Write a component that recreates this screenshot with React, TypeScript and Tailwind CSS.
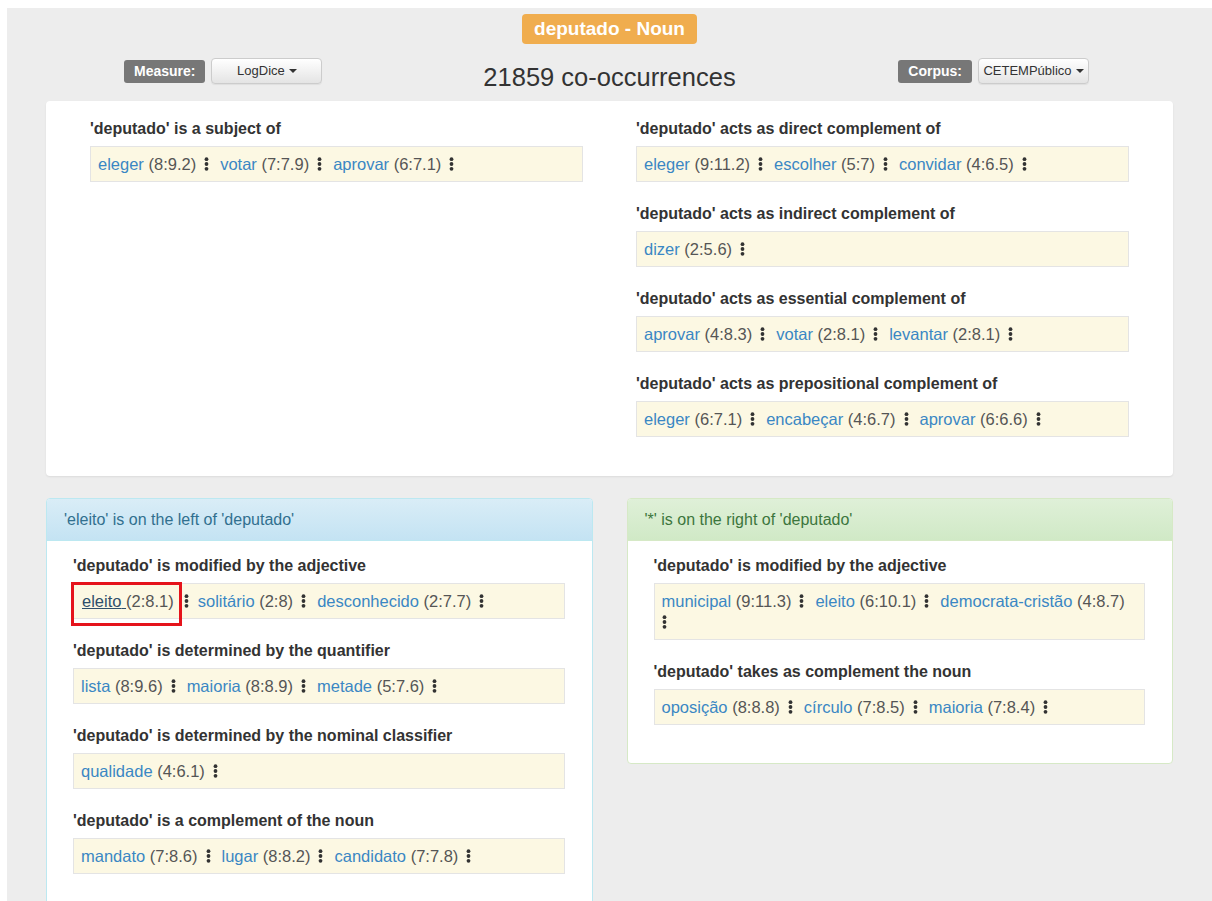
import React from 'react';

type Hit = { word: string; score: string; active?: boolean; breakMenu?: boolean };
type Relation = { title: string; hits: Hit[] };

const SUBJECT: Relation[] = [
  {
    title: "'deputado' is a subject of",
    hits: [
      { word: 'eleger', score: '(8:9.2)' },
      { word: 'votar', score: '(7:7.9)' },
      { word: 'aprovar', score: '(6:7.1)' },
    ],
  },
];

const COMPLEMENTS: Relation[] = [
  {
    title: "'deputado' acts as direct complement of",
    hits: [
      { word: 'eleger', score: '(9:11.2)' },
      { word: 'escolher', score: '(5:7)' },
      { word: 'convidar', score: '(4:6.5)' },
    ],
  },
  {
    title: "'deputado' acts as indirect complement of",
    hits: [{ word: 'dizer', score: '(2:5.6)' }],
  },
  {
    title: "'deputado' acts as essential complement of",
    hits: [
      { word: 'aprovar', score: '(4:8.3)' },
      { word: 'votar', score: '(2:8.1)' },
      { word: 'levantar', score: '(2:8.1)' },
    ],
  },
  {
    title: "'deputado' acts as prepositional complement of",
    hits: [
      { word: 'eleger', score: '(6:7.1)' },
      { word: 'encabeçar', score: '(4:6.7)' },
      { word: 'aprovar', score: '(6:6.6)' },
    ],
  },
];

const LEFT: Relation[] = [
  {
    title: "'deputado' is modified by the adjective",
    hits: [
      { word: 'eleito', score: '(2:8.1)', active: true },
      { word: 'solitário', score: '(2:8)' },
      { word: 'desconhecido', score: '(2:7.7)' },
    ],
  },
  {
    title: "'deputado' is determined by the quantifier",
    hits: [
      { word: 'lista', score: '(8:9.6)' },
      { word: 'maioria', score: '(8:8.9)' },
      { word: 'metade', score: '(5:7.6)' },
    ],
  },
  {
    title: "'deputado' is determined by the nominal classifier",
    hits: [{ word: 'qualidade', score: '(4:6.1)' }],
  },
  {
    title: "'deputado' is a complement of the noun",
    hits: [
      { word: 'mandato', score: '(7:8.6)' },
      { word: 'lugar', score: '(8:8.2)' },
      { word: 'candidato', score: '(7:7.8)' },
    ],
  },
];

const RIGHT: Relation[] = [
  {
    title: "'deputado' is modified by the adjective",
    hits: [
      { word: 'municipal', score: '(9:11.3)' },
      { word: 'eleito', score: '(6:10.1)' },
      { word: 'democrata-cristão', score: '(4:8.7)', breakMenu: true },
    ],
  },
  {
    title: "'deputado' takes as complement the noun",
    hits: [
      { word: 'oposição', score: '(8:8.8)' },
      { word: 'círculo', score: '(7:8.5)' },
      { word: 'maioria', score: '(7:8.4)' },
    ],
  },
];

function Dots({ className = '' }: { className?: string }) {
  return (
    <svg width="5" height="14" viewBox="0 0 5 14" className={`inline-block align-[-1px] ${className}`}>
      <circle cx="2.5" cy="2.2" r="1.9" fill="#333" />
      <circle cx="2.5" cy="7" r="1.9" fill="#333" />
      <circle cx="2.5" cy="11.8" r="1.9" fill="#333" />
    </svg>
  );
}

function HitList({ hits }: { hits: Hit[] }) {
  const marked = hits.some((h) => h.active);
  return (
    <div className="relative border border-[#e4e4e4] bg-[#fcf8e3] px-[7px] pt-[7px] pb-[6px] text-[16.5px] leading-[21px]">
      {hits.map((h, i) => (
        <React.Fragment key={i}>
          <span className={h.active ? 'ml-[1px] text-[#2f4f6b] underline' : 'text-[#3a87c4]'}>
            {h.word}
            {h.active ? ' ' : ''}
          </span>
          {!h.active && ' '}
          <span className="text-[#555]">{h.score}</span>
          {h.breakMenu ? (
            <>
              <br />
              <Dots />
            </>
          ) : (
            <Dots className={h.active ? 'ml-[10px] mr-[9px]' : 'ml-[8px] mr-[11px]'} />
          )}
        </React.Fragment>
      ))}
      {marked && (
        <div className="pointer-events-none absolute left-[-3px] top-[-2px] h-[44px] w-[111px] border-[3px] border-[#e5131b]" />
      )}
    </div>
  );
}

function RelationBlock({ rel }: { rel: Relation }) {
  return (
    <div className="mb-[21px]">
      <div className="mb-[7px] text-[16px] font-bold leading-[21px] text-[#333]">{rel.title}</div>
      <HitList hits={rel.hits} />
    </div>
  );
}

function Panel({ title, tone, rels }: { title: string; tone: 'info' | 'success'; rels: Relation[] }) {
  const info = tone === 'info';
  return (
    <div className={`overflow-hidden rounded-[4px] border bg-white ${info ? 'border-[#bce8f1]' : 'border-[#d6e9c6]'}`}>
      <div
        className={`flex h-[42px] items-center border-b px-[17px] text-[16px] ${
          info
            ? 'border-[#bce8f1] bg-linear-to-b from-[#d9edf7] to-[#c4e3f3] text-[#31708f]'
            : 'border-[#d6e9c6] bg-linear-to-b from-[#dff0d8] to-[#d0e9c6] text-[#3c763d]'
        }`}
      >
        {title}
      </div>
      <div className="pl-[26px] pr-[27px] pt-[14px] pb-[17px]">
        {rels.map((r, i) => (
          <RelationBlock key={i} rel={r} />
        ))}
      </div>
    </div>
  );
}

function Caret() {
  return <span className="ml-[4px] inline-block h-0 w-0 border-x-[4px] border-t-[4px] border-x-transparent border-t-[#333] align-middle" />;
}

function Picker({ label, value }: { label: string; value: string }) {
  return (
    <div className="flex items-center gap-[6px]">
      <span className="flex h-[23px] items-center rounded-[3px] bg-[#777] px-[10px] text-[14px] font-bold text-white">{label}</span>
      <button className="flex h-[26px] w-[111px] items-center justify-center rounded-[4px] border border-[#ccc] bg-linear-to-b from-white to-[#e4e4e4] text-[13px] text-[#333] shadow-[0_1px_1px_rgba(0,0,0,0.06)]">
        {value}
        <Caret />
      </button>
    </div>
  );
}

export default function App() {
  return (
    <div className="min-h-[901px] bg-white pl-[7px] pt-[8px] font-['Liberation_Sans',Arial,sans-serif]">
      <div className="min-h-[893px] bg-[#ededed] px-[39px] pt-[6px]">
        <div className="flex justify-center">
          <span className="flex h-[30px] items-center rounded-[4px] bg-[#f0ad4e] px-[12px] text-[19px] font-bold text-white">deputado - Noun</span>
        </div>

        <div className="mt-[14px] grid h-[26px] grid-cols-[1fr_auto_1fr] items-start pl-[78px] pr-[84px]">
          <div className="flex justify-start">
            <Picker label="Measure:" value="LogDice" />
          </div>
          <div className="mt-[4px] pl-[6px] text-[25.5px] leading-[30px] text-[#333]">21859 co-occurrences</div>
          <div className="flex justify-end">
            <Picker label="Corpus:" value="CETEMPúblico" />
          </div>
        </div>

        <div className="mt-[17px] grid grid-cols-2 gap-x-[53px] rounded-[4px] bg-white px-[44px] pt-[17px] pb-[18px] shadow-[0_1px_2px_rgba(0,0,0,0.08)]">
          <div>
            {SUBJECT.map((r, i) => (
              <RelationBlock key={i} rel={r} />
            ))}
          </div>
          <div>
            {COMPLEMENTS.map((r, i) => (
              <RelationBlock key={i} rel={r} />
            ))}
          </div>
        </div>

        <div className="mt-[22px] grid grid-cols-2 items-start gap-x-[34px]">
          <Panel title="'eleito' is on the left of 'deputado'" tone="info" rels={LEFT} />
          <Panel title="'*' is on the right of 'deputado'" tone="success" rels={RIGHT} />
        </div>
      </div>
    </div>
  );
}
